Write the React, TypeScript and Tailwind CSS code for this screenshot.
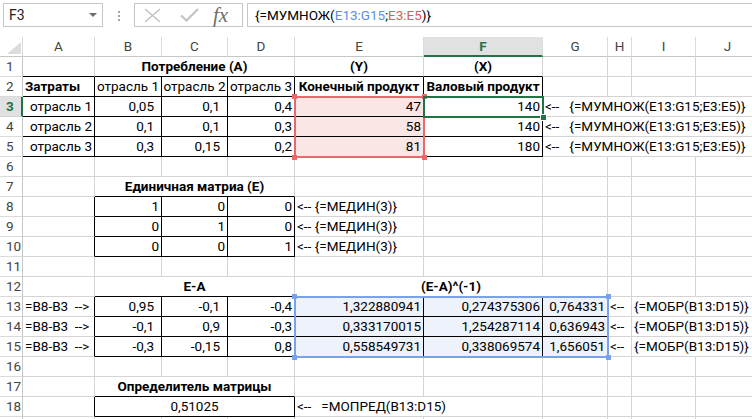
import React from 'react';

type Align = 'l' | 'r' | 'c';
type Cell = { c: number; span?: 1 | 2 | 3 | 4; t: string; al?: Align; b?: boolean; wide?: boolean };

const LETTERS = ['A', 'B', 'C', 'D', 'E', 'F', 'G', 'H', 'I', 'J'];
const SPAN: Record<number, string> = { 1: '', 2: 'col-span-2', 3: 'col-span-3', 4: 'col-span-4' };

// bordered (black) ranges: [row1, col1, row2, col2], A = 1
const BOXES = [
  [2, 1, 5, 6],
  [8, 2, 10, 4],
  [13, 2, 15, 7],
  [18, 2, 18, 4],
];
const boxed = (r: number, c: number) =>
  BOXES.some(([r1, c1, r2, c2]) => r >= r1 && r <= r2 && c >= c1 && c <= c2);

const inRed = (r: number, c: number) => c === 5 && r >= 3 && r <= 5;
const inBlue = (r: number, c: number) => c >= 5 && c <= 7 && r >= 13 && r <= 15;

const mult = (name: string, a: string, b: string, d: string, y: string, x: string): Cell[] => [
  { c: 1, t: name, al: 'r' },
  { c: 2, t: a, al: 'r', wide: true },
  { c: 3, t: b, al: 'r', wide: true },
  { c: 4, t: d, al: 'r' },
  { c: 5, t: y, al: 'r' },
  { c: 6, t: x, al: 'r' },
  { c: 7, span: 4, t: '<--   {=МУМНОЖ(E13:G15;E3:E5)}', al: 'l' },
];

const unit = (a: string, b: string, d: string): Cell[] => [
  { c: 2, t: a, al: 'r' },
  { c: 3, t: b, al: 'r' },
  { c: 4, t: d, al: 'r' },
  { c: 5, t: '<-- {=МЕДИН(3)}', al: 'l' },
];

const inv = (a: string, b: string, d: string, e: string, f: string, g: string): Cell[] => [
  { c: 1, t: '=B8-B3  -->', al: 'l' },
  { c: 2, t: a, al: 'r', wide: true },
  { c: 3, t: b, al: 'r', wide: true },
  { c: 4, t: d, al: 'r' },
  { c: 5, t: e, al: 'r' },
  { c: 6, t: f, al: 'r' },
  { c: 7, t: g, al: 'r' },
  { c: 8, t: '<--', al: 'l' },
  { c: 9, span: 2, t: '{=МОБР(B13:D15)}', al: 'l' },
];

const DATA: Record<number, Cell[]> = {
  1: [
    { c: 2, span: 3, t: 'Потребление (A)', al: 'c', b: true },
    { c: 5, t: '(Y)', al: 'c', b: true },
    { c: 6, t: '(X)', al: 'c', b: true },
  ],
  2: [
    { c: 1, t: 'Затраты', al: 'l', b: true },
    { c: 2, t: 'отрасль 1', al: 'c' },
    { c: 3, t: 'отрасль 2', al: 'c' },
    { c: 4, t: 'отрасль 3', al: 'c' },
    { c: 5, t: 'Конечный продукт', al: 'c', b: true },
    { c: 6, t: 'Валовый продукт', al: 'c', b: true },
  ],
  3: mult('отрасль 1', '0,05', '0,1', '0,4', '47', '140'),
  4: mult('отрасль 2', '0,1', '0,1', '0,3', '58', '140'),
  5: mult('отрасль 3', '0,3', '0,15', '0,2', '81', '180'),
  7: [{ c: 2, span: 3, t: 'Единичная матриа (E)', al: 'c', b: true }],
  8: unit('1', '0', '0'),
  9: unit('0', '1', '0'),
  10: unit('0', '0', '1'),
  12: [
    { c: 2, span: 3, t: 'E-A', al: 'c', b: true },
    { c: 5, span: 3, t: '(E-A)^(-1)', al: 'c', b: true },
  ],
  13: inv('0,95', '-0,1', '-0,4', '1,322880941', '0,274375306', '0,764331'),
  14: inv('-0,1', '0,9', '-0,3', '0,333170015', '1,254287114', '0,636943'),
  15: inv('-0,3', '-0,15', '0,8', '0,558549731', '0,338069574', '1,656051'),
  17: [{ c: 2, span: 3, t: 'Определитель матрицы', al: 'c', b: true }],
  18: [
    { c: 2, span: 3, t: '0,51025', al: 'c' },
    { c: 5, span: 2, t: '<--   =МОПРЕД(B13:D15)', al: 'l' },
  ],
};

const ALIGN: Record<Align, string> = {
  l: 'text-left pl-[2px]',
  r: 'text-right pr-[2px]',
  c: 'text-center',
};

function SheetRow({ r }: { r: number }) {
  const defs = DATA[r] ?? [];
  const out: React.ReactNode[] = [];
  const active = r === 3;
  out.push(
    <div
      key="h"
      className={
        active
          ? 'border-b border-r-2 border-b-[#d4d4d4] border-r-[#217346] bg-[#e1e1e1] pl-[6px] leading-[19px] text-[#217346] font-bold'
          : 'border-b border-r border-b-[#dadada] border-r-[#c6c6c6] pl-[6px] leading-[19px] text-[#444]'
      }
    >
      {r < 19 ? r : ''}
    </div>
  );
  let c = 1;
  while (c <= 10) {
    const def = defs.find((d) => d.c === c);
    const span = def?.span ?? 1;
    const e = c + span - 1;
    let bottom = false;
    for (let k = c; k <= e; k++) if (boxed(r, k) || boxed(r + 1, k)) bottom = true;
    const right = boxed(r, e) || boxed(r, e + 1);
    const bg = inRed(r, c) ? 'bg-[#fbe6e6]' : inBlue(r, c) ? 'bg-[#edf2fb]' : '';
    out.push(
      <div
        key={c}
        className={[
          'overflow-hidden whitespace-pre border-b border-r leading-[19px]',
          SPAN[span],
          bottom ? 'border-b-black' : 'border-b-[#d4d4d4]',
          right ? 'border-r-black' : 'border-r-[#d4d4d4]',
          bg,
          def ? ALIGN[def.al ?? 'l'] : '',
          def?.wide ? 'pr-[7px]' : '',
          def?.b ? 'font-bold' : '',
        ].join(' ')}
      >
        {def?.t}
      </div>
    );
    c = e + 1;
  }
  return <>{out}</>;
}

function Handles({ color }: { color: string }) {
  const base = `absolute h-[5px] w-[5px] ${color}`;
  return (
    <>
      <span className={`${base} -left-[4px] -top-[4px]`} />
      <span className={`${base} -right-[4px] -top-[4px]`} />
      <span className={`${base} -left-[4px] -bottom-[4px]`} />
      <span className={`${base} -right-[4px] -bottom-[4px]`} />
    </>
  );
}

function FormulaBar() {
  return (
    <div className="flex h-[37px] items-start pt-[3px]">
      <div className="ml-[3px] flex h-[24px] w-[100px] items-center justify-between border border-[#c6c6c6] pl-[5px] pr-[5px]">
        <span className="text-[14px] text-[#222]">F3</span>
        <svg width="8" height="4" viewBox="0 0 8 4">
          <path d="M0 0h8L4 4z" fill="#6d6d6d" />
        </svg>
      </div>
      <div className="ml-[15px] mt-[8px] flex flex-col gap-[2px]">
        <span className="h-[2px] w-[2px] bg-[#a6a6a6]" />
        <span className="h-[2px] w-[2px] bg-[#a6a6a6]" />
        <span className="h-[2px] w-[2px] bg-[#a6a6a6]" />
      </div>
      <div className="ml-[14px] flex h-[24px] w-[109px] items-center border border-[#c6c6c6] pl-[9px]">
        <svg width="17" height="15" viewBox="0 0 17 15">
          <path d="M1 1L16 14M16 1L1 14" stroke="#c4c4c4" strokeWidth="1.6" fill="none" />
        </svg>
        <svg className="ml-[19px]" width="19" height="14" viewBox="0 0 19 14">
          <path d="M1 7.5L6.5 12.5L18 1" stroke="#c4c4c4" strokeWidth="2.2" fill="none" />
        </svg>
        <span className="ml-[14px] font-['Liberation_Serif',serif] text-[21px] italic leading-[20px] text-[#6e6e6e]">
          fx
        </span>
      </div>
      <div className="ml-[4px] flex h-[24px] flex-1 items-center border border-r-0 border-[#c6c6c6] pl-[7px] text-[13.5px]">
        <span>{'{=МУМНОЖ('}</span>
        <span className="text-[#5b8ee3]">E13:G15</span>
        <span>;</span>
        <span className="text-[#e5595e]">E3:E5</span>
        <span>{')}'}</span>
      </div>
    </div>
  );
}

const GRID = 'grid grid-cols-[23px_72px_67px_66px_67px_129px_119px_65px_24px_64px_64px] auto-rows-[20px]';

export default function App() {
  return (
    <div className="h-[419px] w-[752px] overflow-hidden bg-white font-['Roboto',sans-serif] text-[13.5px] text-black">
      <FormulaBar />
      <div className="relative">
        <div className={GRID}>
          <div className="flex items-end justify-end border-b border-r border-b-[#c6c6c6] border-r-[#dadada] pb-[2px] pr-[1px]">
            <svg width="14" height="12" viewBox="0 0 14 12">
              <path d="M14 0V12H0z" fill="#dcdcdc" />
            </svg>
          </div>
          {LETTERS.map((l) =>
            l === 'F' ? (
              <div
                key={l}
                className="border-b-2 border-r border-b-[#217346] border-r-[#dadada] bg-[#e1e1e1] text-center font-bold leading-[19px] text-[#217346]"
              >
                {l}
              </div>
            ) : (
              <div
                key={l}
                className="border-b border-r border-b-[#c6c6c6] border-r-[#dadada] text-center leading-[19px] text-[#444]"
              >
                {l}
              </div>
            )
          )}
          {Array.from({ length: 19 }, (_, i) => (
            <SheetRow key={i} r={i + 1} />
          ))}
        </div>
        {/* range highlights drawn over the cells */}
        <div className={`pointer-events-none absolute inset-0 ${GRID}`}>
          <div className="relative col-start-6 row-span-3 row-start-4 -m-px border-2 border-[#e8686b]">
            <Handles color="bg-[#e8686b]" />
          </div>
          <div className="relative col-span-3 col-start-6 row-span-3 row-start-14 -m-px border-2 border-[#7ba1ea]">
            <Handles color="bg-[#7ba1ea]" />
          </div>
          <div className="relative col-start-7 row-start-4 -m-px border-2 border-[#217346]">
            <span className="absolute -bottom-[5px] -right-[5px] h-[7px] w-[7px] border border-white bg-[#217346]" />
          </div>
        </div>
      </div>
    </div>
  );
}
